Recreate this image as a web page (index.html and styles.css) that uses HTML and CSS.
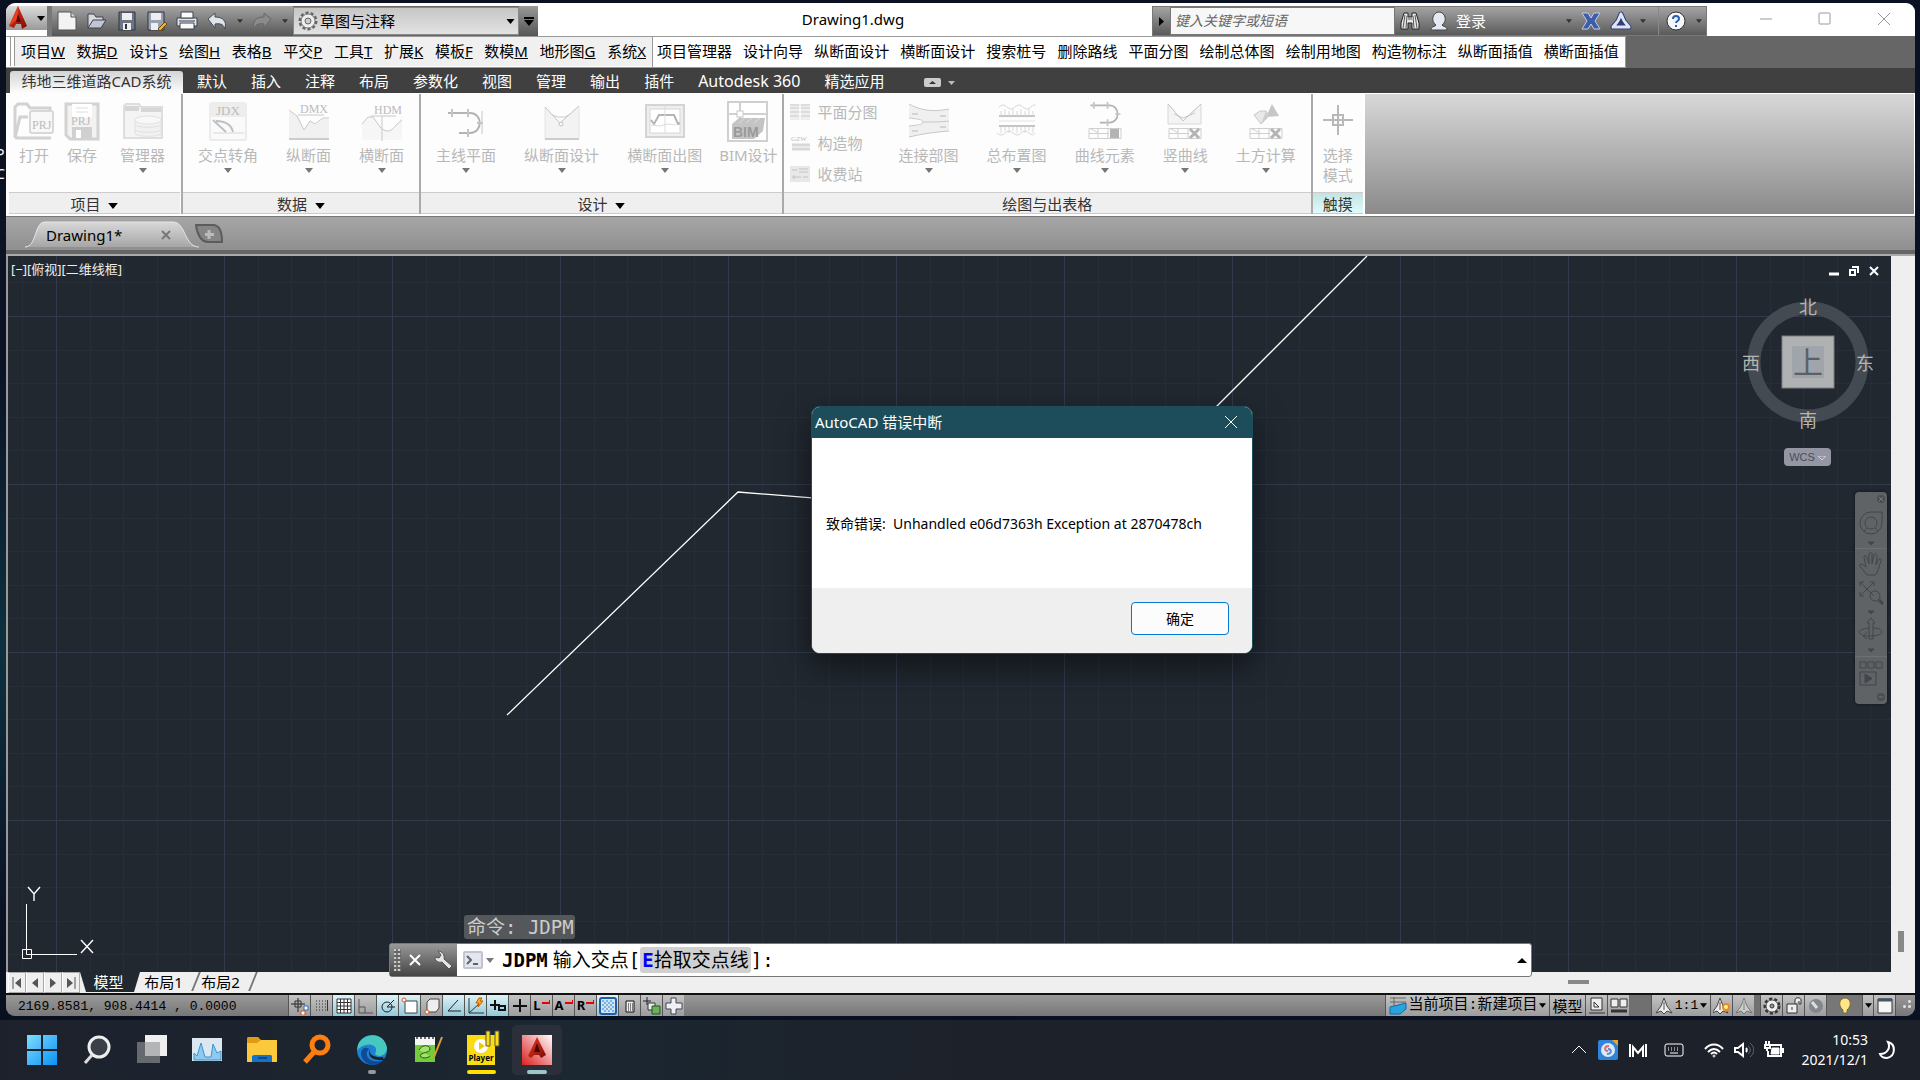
FILE: index.html
```html
<!DOCTYPE html>
<html lang="zh-CN">

<head>
    <meta charset="UTF-8">
    <title>Drawing1.dwg</title>
    <link rel="stylesheet" href="styles.css">
</head>

<body>

    <!-- shared shapes -->
    <svg class="defs" aria-hidden="true">
        <symbol id="caret" viewBox="0 0 8 5"><path d="M0 0h8L4 5z" /></symbol>
        <symbol id="sheet" viewBox="0 0 34 12">
            <path d="M1 1h32v10H1zM1 6h20M10 1v10M20 1v10M2 1l8 4" fill="none" stroke="#cfcfcf" />
        </symbol>
        <symbol id="curve" viewBox="0 0 36 28">
            <path d="M1 4h22c13 0 13 20 0 20H12" fill="none" stroke="#b4b4b4" stroke-width="2" />
            <path d="M5 0v8M21 0v8M30 14h6M21 20v8" fill="none" stroke="#c4c4c4" stroke-width="2" />
        </symbol>
        <symbol id="person-a" viewBox="0 0 18 18">
            <path d="M9 1l3 8 5 7-5-2-3 3-3-3-5 2 5-7z" fill="#eee" stroke="#444" />
            <path d="M9 5v8" stroke="#555" />
        </symbol>
        <linearGradient id="red" x1="0" y1="0" x2="1" y2="1">
            <stop offset="0" stop-color="#ea3a1f" />
            <stop offset="1" stop-color="#7d0c06" />
        </linearGradient>
        <linearGradient id="redbox" x1="0" y1="1" x2="1" y2="0">
            <stop offset="0" stop-color="#dc2020" />
            <stop offset="1" stop-color="#ffffff" />
        </linearGradient>
        <linearGradient id="winlogo" x1="0" y1="0" x2="1" y2="1">
            <stop offset="0" stop-color="#7ddcff" />
            <stop offset="1" stop-color="#0a92f5" />
        </linearGradient>
    </svg>

    <div class="desktop">
        <div class="desktop-label">P<br>C</div>

        <div class="window">

            <!-- title bar -->
            <header class="titlebar">
                <button class="app-btn" aria-label="菜单">
                    <svg width="18" height="24" viewBox="0 0 18 24"><path d="M9 0l9 20-5 3-1-5H7l-2 4-5-2z" fill="url(#red)" /><path d="M9 0v13l-9 7z" fill="#e5401f" /><path d="M9 8l3 8H7z" fill="#5c0805" /></svg>
                    <svg class="caret" width="8" height="5"><use href="#caret" /></svg>
                </button>
                <div class="qat">
                    <button aria-label="新建"><svg width="22" height="20" viewBox="0 0 22 20"><path d="M2 1h13l5 5v13H2z" fill="#f3f3f3" stroke="#555" /><path d="M15 1v5h5" fill="#cfd3dc" stroke="#555" /></svg></button>
                    <button aria-label="打开"><svg width="22" height="20" viewBox="0 0 22 20"><path d="M2 17V3h6l2 3h7v3" fill="#d6d9df" stroke="#3c4250" /><path d="M2 17l5-8h13l-5 8z" fill="#c0c6d2" stroke="#3c4250" /></svg></button>
                    <button aria-label="保存"><svg width="20" height="20" viewBox="0 0 20 20"><path d="M2 1h16v18H2z" fill="#6c7586" stroke="#2e3542" /><path d="M5 2h10v7H5zM6 12h8v7H6z" fill="#eee" /><path d="M8 13h2v5H8z" fill="#333" /></svg></button>
                    <button aria-label="另存为"><svg width="22" height="20" viewBox="0 0 22 20"><path d="M2 1h16v18H2z" fill="#9aa1ae" stroke="#2e3542" /><path d="M5 2h10v7H5zM5 12h7v7H5z" fill="#eee" /><path d="M12 18l7-7 2 2-7 7z" fill="#f0b429" stroke="#6b4a10" /></svg></button>
                    <button aria-label="打印"><svg width="22" height="20" viewBox="0 0 22 20"><path d="M1 7h20v8H1z" fill="#e4e6ea" stroke="#3c4250" /><path d="M5 1h12v6H5zM4 12h14v6H4z" fill="#fafafa" stroke="#3c4250" /><path d="M3 10h16" stroke="#8a90a0" stroke-width="2" /></svg></button>
                    <button aria-label="放弃"><svg width="20" height="16" viewBox="0 0 20 16"><path d="M1 6l7-6v4c8 0 12 4 10 12-1-4-4-6-10-5v4z" fill="#dfe3ea" stroke="#454c5a" /></svg></button>
                    <button class="drop" aria-label="放弃列表"><svg width="6" height="4"><use href="#caret" /></svg></button>
                    <button aria-label="重做"><svg width="20" height="16" viewBox="0 0 20 16"><path d="M19 6l-7-6v4C4 4 0 8 2 16c1-4 4-6 10-5v4z" fill="#8b8b8b" stroke="#666" /></svg></button>
                    <button class="drop" aria-label="重做列表"><svg width="6" height="4"><use href="#caret" /></svg></button>
                </div>
                <div class="workspace">
                    <svg class="gear" width="20" height="20" viewBox="0 0 20 20"><circle cx="10" cy="10" r="8" fill="none" stroke="#666" stroke-width="3" stroke-dasharray="3 2" /><circle cx="10" cy="10" r="7" fill="#eee" stroke="#777" /><circle cx="10" cy="10" r="3" fill="#ccc" stroke="#666" /></svg>
                    <select aria-label="工作空间"><option>草图与注释</option></select>
                    <svg class="caret" width="9" height="5"><use href="#caret" /></svg>
                </div>
                <button class="qat-more" aria-label="自定义"><svg width="10" height="9" viewBox="0 0 10 9"><path d="M0 0h10v2H0zM0 3h10L5 9z" /></svg></button>

                <h1>Drawing1.dwg</h1>

                <div class="infocenter">
                    <button class="info-toggle" aria-label="展开"><svg width="5" height="9" viewBox="0 0 5 9"><path d="M0 0l5 4.500L0 9z" /></svg></button>
                    <input type="text" placeholder="键入关键字或短语" aria-label="搜索">
                    <button class="search" aria-label="搜索"><svg width="20" height="20" viewBox="0 0 20 20"><path d="M4 2h4v4h4V2h4l3 10v6h-7v-6H8v6H1v-6z" fill="#e8e8e8" stroke="#222" /><path d="M5 4L3 17M7 5L6 17M13 5l1 12M15 4l2 13M8 8h4" stroke="#555" /></svg></button>
                    <button class="login"><svg width="18" height="20" viewBox="0 0 18 20"><path d="M1 19c0-4 4-3 5-5-6-4-3-13 3-13s9 9 3 13c1 2 5 1 5 5z" fill="#e6e9f2" stroke="#444" /></svg>登录</button>
                    <button class="drop" aria-label="登录选项"><svg width="6" height="4"><use href="#caret" /></svg></button>
                    <button aria-label="Exchange"><svg width="20" height="18" viewBox="0 0 20 18"><path d="M1 1h6l3 5 3-5h6l-5 8 5 8h-6l-3-5-3 5H1l5-8z" fill="#3d5cab" stroke="#c4cde6" /></svg></button>
                    <button aria-label="Autodesk 360"><svg width="22" height="20" viewBox="0 0 22 20"><path d="M11 3L8 10 3 16h16l-5-6z" fill="none" stroke="#2e3f7a" stroke-width="5" stroke-linejoin="round" /><path d="M11 3L8 10 3 16h16l-5-6z" fill="none" stroke="#dfe4f2" stroke-width="3" stroke-linejoin="round" /><path d="M11 8l-4 6h8z" fill="#2e3f7a" /></svg></button>
                    <button class="drop" aria-label="更多"><svg width="6" height="4"><use href="#caret" /></svg></button>
                    <button class="help" aria-label="帮助"><svg width="20" height="20" viewBox="0 0 20 20"><circle cx="10" cy="10" r="9" fill="#f4f6fa" stroke="#333" /><path d="M7 8c0-4 6-4 6 0 0 2-3 2-3 4M10 14v2" fill="none" stroke="#2d5bb0" stroke-width="2" /></svg></button>
                    <button class="drop" aria-label="帮助选项"><svg width="6" height="4"><use href="#caret" /></svg></button>
                </div>
                <div class="win-controls">
                    <button aria-label="最小化"><svg width="14" height="14"><path d="M1 7h12" /></svg></button>
                    <button aria-label="最大化"><svg width="14" height="14"><rect x="1" y="1" width="11" height="11" rx="1" /></svg></button>
                    <button aria-label="关闭"><svg width="14" height="14"><path d="M1 1l12 12M13 1L1 13" /></svg></button>
                </div>
            </header>

            <!-- menus -->
            <div class="menubar">
                <nav class="menus">
                    <button>项目<u>W</u></button>
                    <button>数据<u>D</u></button>
                    <button>设计<u>S</u></button>
                    <button>绘图<u>H</u></button>
                    <button>表格<u>B</u></button>
                    <button>平交<u>P</u></button>
                    <button>工具<u>T</u></button>
                    <button>扩展<u>K</u></button>
                    <button>模板<u>F</u></button>
                    <button>数模<u>M</u></button>
                    <button>地形图<u>G</u></button>
                    <button>系统<u>X</u></button>
                </nav>
                <nav class="tools">
                    <button>项目管理器</button>
                    <button>设计向导</button>
                    <button>纵断面设计</button>
                    <button>横断面设计</button>
                    <button>搜索桩号</button>
                    <button>删除路线</button>
                    <button>平面分图</button>
                    <button>绘制总体图</button>
                    <button>绘制用地图</button>
                    <button>构造物标注</button>
                    <button>纵断面插值</button>
                    <button>横断面插值</button>
                </nav>
            </div>

            <nav class="ribbon-tabs">
                <button class="active">纬地三维道路CAD系统</button>
                <button>默认</button>
                <button>插入</button>
                <button>注释</button>
                <button>布局</button>
                <button>参数化</button>
                <button>视图</button>
                <button>管理</button>
                <button>输出</button>
                <button>插件</button>
                <button class="latin">Autodesk 360</button>
                <button>精选应用</button>
                <button class="collapse" aria-label="最小化功能区"><svg width="34" height="10" viewBox="0 0 34 10"><rect width="17" height="9" rx="2" fill="#ccc" /><path d="M5 6h7L8.500 3z" fill="#333" /><path d="M24 3h7l-3.500 4z" fill="#bbb" /></svg></button>
            </nav>

            <!-- ribbon -->
            <div class="ribbon">
                <section class="panel first">
                    <div class="items">
                        <button class="tight"><svg viewBox="0 0 40 40"><path d="M1 36V5l3-3h9l3 4h20v6M1 36L6 15h8M1 36h36" fill="none" stroke="#d2d2d2" stroke-width="3" /><rect x="16" y="9" width="23" height="22" rx="2" fill="#f8f8f8" stroke="#d8d8d8" stroke-width="2" /><text x="18" y="27" font-size="12">PRJ</text></svg>打开</button>
                        <button class="tight"><svg viewBox="0 0 40 40"><path d="M4 2h32v35H8l-4-4z" fill="#f2f2f2" stroke="#d2d2d2" stroke-width="3" /><path d="M10 2h20v14H10z" fill="#fff" /><path d="M14 6h12M14 10h12" stroke="#ddd" /><path d="M10 25h20v12H10z" fill="#d0d0d0" /><path d="M14 28h5v8h-5z" fill="#fff" /><text x="9" y="23" font-size="12">PRJ</text></svg>保存</button>
                        <button><svg viewBox="0 0 40 40"><path d="M1 36V4l2-2h13l2 3h21v31z" fill="#f4f4f4" stroke="#dedede" stroke-width="2" /><path d="M2 4h14v5H2zM18 6h20v4H18z" fill="#d6d6d6" /><path d="M12 18v14c4 3 22 3 26 0V18" fill="#f1f1f1" stroke="#e2e2e2" /><ellipse cx="25" cy="18" rx="13" ry="4" fill="#f8f8f8" stroke="#e2e2e2" /><path d="M12 23c4 3 22 3 26 0M12 28c4 3 22 3 26 0" fill="none" stroke="#e0e0e0" /></svg>管理器<i></i></button>
                    </div>
                    <footer>项目 <svg width="10" height="6"><use href="#caret" /></svg></footer>
                </section>
                <section class="panel">
                    <div class="items">
                        <button><svg viewBox="0 0 40 40"><rect x="2" y="1" width="36" height="37" rx="1" fill="#fafafa" stroke="#dcdcdc" /><path d="M2 1h36v14H2z" fill="#ededed" /><text x="8" y="13" font-size="13">JDX</text><path d="M5 18l13 12M8 19c9 0 15 3 17 11" fill="none" stroke="#c0c0c0" stroke-width="2" /><path d="M5 31h31" stroke="#d8d8d8" /></svg>交点转角<i></i></button>
                        <button><svg viewBox="0 0 40 40"><path d="M0 8l8 6 7 14 6-10 5 5 8-6 6 0v20H0z" fill="#f1f1f1" /><path d="M0 8l8 6 7 14 6-9 5 3 8-6h6M9 13h26" fill="none" stroke="#c8c8c8" /><path d="M0 37h40" stroke="#ccc" stroke-width="2" /><text x="11" y="11" font-size="12">DMX</text></svg>纵断面<i></i></button>
                        <button><svg viewBox="0 0 40 40"><path d="M0 22l6-7h5l7 10 7 4 7-2 8-13v24H0z" fill="#f6f6f6" /><path d="M0 22l6-7h5l7 10c7 7 12 4 16-2l6-5M20 14v25M9 14h25" fill="none" stroke="#c8c8c8" /><text x="12" y="12" font-size="12">HDM</text></svg>横断面<i></i></button>
                    </div>
                    <footer>数据 <svg width="10" height="6"><use href="#caret" /></svg></footer>
                </section>
                <section class="panel">
                    <div class="items">
                        <button><svg viewBox="0 0 40 40"><use href="#curve" x="1" y="7" width="36" height="28" /><path d="M36 9v23" stroke="#c8c8c8" /></svg>主线平面<i></i></button>
                        <button><svg viewBox="0 0 40 40"><path d="M3 5l15 16L37 4v33H3z" fill="#f3f3f3" stroke="#e4e4e4" /><path d="M3 5l15 16L37 4M10 13l6 2h7l5-3" fill="none" stroke="#cacaca" /><path d="M3 37h34" stroke="#ccc" stroke-width="2" /><circle cx="19" cy="22" r="2" fill="#fff" stroke="#c0c0c0" /></svg>纵断面设计<i></i></button>
                        <button><svg viewBox="0 0 40 40"><rect x="1" y="3" width="38" height="32" fill="#efefef" stroke="#d4d4d4" stroke-width="2" /><rect x="5" y="7" width="30" height="24" fill="#fff" stroke="#d6d6d6" /><path d="M6 18l3 4 5-9h15l4 9 2-1" fill="none" stroke="#b4b4b4" stroke-width="2" /><path d="M6 23l9 1 8-2 8 1M20 4v27" fill="none" stroke="#ddd" /></svg>横断面出图<i></i></button>
                        <button class="snug"><svg viewBox="0 0 40 40"><rect x="0" y="0" width="39" height="39" fill="#fff" stroke="#d0d0d0" stroke-width="2" /><path d="M12 0v16M0 12h39" stroke="#d0d0d0" stroke-width="2" /><rect x="9" y="9" width="6" height="6" fill="#fff" stroke="#c8c8c8" /><path d="M4 22l7-6h26l-2 13-9 8H4z" fill="#c4c4c4" /><path d="M11 21l6-5M18 21l6-5M26 21l6-5" stroke="#ddd" /><text class="bim" x="5" y="35" font-size="14">BIM</text></svg>BIM设计</button>
                    </div>
                    <footer>设计 <svg width="10" height="6"><use href="#caret" /></svg></footer>
                </section>
                <section class="panel">
                    <div class="items">
                        <div class="list">
                            <button><svg viewBox="0 0 20 16"><path d="M0 0h20v16H0z" fill="#eee" /><path d="M0 4h9M0 8h9M0 12h9M11 4h9M11 8h9M11 12h9M0 1h20" stroke="#ccc" /><path d="M10 0v16" stroke="#fff" /></svg>平面分图</button>
                            <button><svg viewBox="0 0 20 16"><text x="1" y="6" font-size="7">GZW</text><path d="M2 10h18M2 14h18" stroke="#d8d8d8" stroke-width="3" /></svg>构造物</button>
                            <button><svg viewBox="0 0 20 16"><path d="M0 0h20v16H0z" fill="#e8e8e8" /><path d="M2 4h5M9 3h9M9 6h9M2 11h9M13 11h5M4 9v4" stroke="#c4c4c4" /></svg>收费站</button>
                        </div>
                        <button><svg viewBox="0 0 40 40"><path d="M0 2c12 7 26 8 40 5v22c-14 1-28 3-40 6V24c7 0 14 0 14-4S7 17 0 16z" fill="#f0f0f0" /><path d="M0 2c12 7 26 8 40 5M40 29c-14 1-28 3-40 6M0 16c7 1 14 1 14 4s-7 3-14 4M14 20c10 0 18 0 26-1" fill="none" stroke="#c8c8c8" /><path d="M3 12h6M31 14h6M3 29h6M31 25h6" stroke="#d4d4d4" stroke-width="2" /></svg>连接部图<i></i></button>
                        <button><svg viewBox="0 0 40 40"><path d="M2 5q4-4 8 0t8 0 8 0 8 0 4-1M0 31q4 4 8 0t8 0 8 0 8 0 6 0" fill="none" stroke="#d8d8d8" /><path d="M2 14h36M2 24h36" stroke="#c4c4c4" stroke-width="2" /><path d="M2 19h36" stroke="#e4e4e4" /><path d="M4 9v5M8 7v7M12 9v5M16 7v7M20 9v5M24 7v7M28 9v5M32 7v7M36 9v5M4 25v6M8 25v4M12 25v6M16 25v4M20 25v6M24 25v4M28 25v6M32 25v4M36 25v6" stroke="#d8d8d8" /></svg>总布置图<i></i></button>
                        <button><svg viewBox="0 0 40 40"><use href="#curve" x="3" y="0" width="34" height="24" /><use href="#sheet" x="3" y="25" width="34" height="13" /><path d="M25 27h9v9h-9z" fill="#b4b4b4" /></svg>曲线元素<i></i></button>
                        <button><svg viewBox="0 0 40 40"><path d="M3 2l15 17L36 2v20H3z" fill="#f4f4f4" stroke="#d8d8d8" /><path d="M3 2l15 17L36 2M9 12l9 4 12-5" fill="none" stroke="#c8c8c8" /><use href="#sheet" x="3" y="25" width="34" height="13" /><path d="M25 27l9 9M34 27l-9 9" stroke="#b4b4b4" stroke-width="3" /></svg>竖曲线<i></i></button>
                        <button><svg viewBox="0 0 40 40"><path d="M26 2l7 12-13 1z" fill="#c6c6c6" /><path d="M8 13l6-4 6 0 3 5-8 8z" fill="#e8e8e8" stroke="#c8c8c8" /><path d="M20 9l3 5-8 8z" fill="#cfcfcf" /><use href="#sheet" x="3" y="25" width="34" height="13" /><path d="M25 27l9 9M34 27l-9 9" stroke="#b4b4b4" stroke-width="3" /></svg>土方计算<i></i></button>
                    </div>
                    <footer>绘图与出表格</footer>
                </section>
                <section class="panel touch">
                    <div class="items">
                        <button class="tight"><svg viewBox="0 0 40 40"><path d="M5 18h30M20 3v30M15 13h10v10H15z" fill="none" stroke="#b8b8b8" stroke-width="2" /></svg>选择<br>模式</button>
                    </div>
                    <footer>触摸</footer>
                </section>
            </div>

            <!-- document tabs -->
            <div class="doc-tabs">
                <a class="doc-tab" href="#">
                    <svg class="shape" viewBox="0 0 174 27" preserveAspectRatio="none"><defs><linearGradient id="tabfill" x1="0" y1="0" x2="0" y2="1"><stop offset="0" stop-color="#d8d8d8" /><stop offset="1" stop-color="#a6a6a6" /></linearGradient></defs><path d="M0 26C12 26 9 1 20 1h128c13 0 11 25 26 25" fill="url(#tabfill)" stroke="#e6e6e6" /></svg>
                    <span>Drawing1*</span>
                    <svg class="x" width="10" height="10"><path d="M1 1l8 8M9 1L1 9" stroke="#777" stroke-width="2" /></svg>
                </a>
                <button class="new-tab" aria-label="新图形"><svg width="29" height="20" viewBox="0 0 29 20"><path d="M1 1h17c6 0 9 6 9 17H13C6 18 2 10 1 1z" fill="#858585" stroke="#5c5c5c" stroke-width="2" /><path d="M14 6v9M10 10.500h9" stroke="#bbb" stroke-width="3" /></svg></button>
            </div>

            <!-- drawing area -->
            <main class="workarea">
                <div class="canvas">
                    <svg class="drawing">
                        <defs>
                            <pattern id="grid" width="168" height="168" patternUnits="userSpaceOnUse" patternTransform="translate(48 60)">
                                <path d="M34.500 0v168M67.500 0v168M101.500 0v168M134.500 0v168M0 34.500h168M0 67.500h168M0 101.500h168M0 134.500h168" stroke="#272e39" />
                                <path d="M.5 0v168M0 .5h168" stroke="#333a4c" />
                            </pattern>
                        </defs>
                        <rect width="100%" height="100%" fill="url(#grid)" />
                        <path d="M499 459L730 236L1094 265L1359 0" fill="none" stroke="#fff" stroke-width="1.300" />
                        <!-- UCS icon -->
                        <g fill="none" stroke="#fff">
                            <path d="M18.500 648v46M19 698.500h50" />
                            <path d="M14.500 693.500h9v9h-9zM18.500 694v4.500h5" />
                            <path d="M20 631l6 7 6-7M26 638v7M73 684l12 13M85 684l-12 13" stroke-width="1.400" />
                        </g>
                    </svg>

                    <span class="view-label">[−][俯视][二维线框]</span>

                    <div class="mdi">
                        <button aria-label="最小化"><svg width="10" height="10"><path d="M0 8h10" stroke="#fff" stroke-width="3" /></svg></button>
                        <button aria-label="还原"><svg width="10" height="10"><path d="M3 1h6v6M1 4h5v5H1z" fill="none" stroke="#fff" stroke-width="2" /></svg></button>
                        <button aria-label="关闭"><svg width="10" height="10"><path d="M1 1l8 8M9 1L1 9" stroke="#fff" stroke-width="2" /></svg></button>
                    </div>

                    <svg class="viewcube" width="136" height="136" viewBox="0 0 136 136">
                        <circle cx="68" cy="68" r="54" fill="none" stroke="#444a51" stroke-width="13" />
                        <rect x="42" y="42" width="52" height="52" fill="#afb1b2" stroke="#7c7e80" />
                        <rect x="52" y="52" width="32" height="32" fill="#9fa5aa" />
                        <text class="top" x="68" y="79">上</text>
                        <text x="68" y="20">北</text>
                        <text x="68" y="133">南</text>
                        <text x="11" y="76">西</text>
                        <text x="125" y="76">东</text>
                    </svg>
                    <button class="wcs">WCS <svg width="8" height="5" viewBox="0 0 8 5"><path d="M0 0h8L4 4z" fill="none" stroke="#d0d0da" /></svg></button>

                    <div class="navbar">
                        <button class="end" aria-label="关闭"><svg width="8" height="8"><circle cx="4" cy="4" r="4" fill="#4b4f52" /><path d="M2 2l4 4M6 2L2 6" stroke="#777" /></svg></button>
                        <button aria-label="控制盘"><svg width="24" height="38" viewBox="0 0 24 38"><path d="M12 4h11v11a11 11 0 1 1-11-11z" /><circle cx="12" cy="15" r="6" /><path d="M8 20l-3 3M16 20l3 3" /><path class="solid" d="M9 34h6l-3 3z" /></svg></button>
                        <button class="sep" aria-label="平移"><svg width="24" height="24" viewBox="0 0 24 24"><path d="M8 23L1 14c-1-2 1-3 3-1l3 2L5 5c0-2 2-2 3 0l2 7V2c0-2 3-2 3 0v10l2-9c1-2 3-1 3 1l-1 9 3-6c1-1 3 0 2 2l-4 12-2 2z" /></svg></button>
                        <button aria-label="缩放"><svg width="24" height="38" viewBox="0 0 24 38"><path d="M1 4l14 14M15 4L1 18M1 8V4h4M11 4h4v4M1 14v4h4" /><circle cx="16" cy="18" r="5" /><path d="M20 22l4 4" stroke-width="3" /><path class="solid" d="M9 33h6l-3 3z" /></svg></button>
                        <button aria-label="动态观察"><svg width="24" height="38" viewBox="0 0 24 38"><path d="M12 1l4 5h-2v16h-4V6H8zM14 11c12 0 12 8-2 8H4M10 11C-2 12-1 17 4 18M8 15l-4 4 4 3" /><path class="solid" d="M9 32h6l-3 3z" /></svg></button>
                        <button class="sep" aria-label="ShowMotion"><svg width="24" height="26" viewBox="0 0 24 26"><path d="M1 1h6v6H1zM9 1h6v6H9zM17 1h6v6h-6zM1 11h16v13H1z" /><path class="solid" d="M6 13v9l7-4.500z" /></svg></button>
                        <button class="end" aria-label="选项"><svg width="8" height="8"><circle cx="4" cy="4" r="4" fill="#4b4f52" /><path d="M2 4h4" stroke="#777" /></svg></button>
                    </div>

                    <div class="command">
                        <div class="history">命令: JDPM</div>
                        <div class="cmd-row">
                            <div class="cmd-handle">
                                <span class="grip"></span>
                                <button aria-label="关闭"><svg width="12" height="12"><path d="M1 1l10 10M11 1L1 11" stroke="#fff" stroke-width="2" /></svg></button>
                                <button aria-label="自定义"><svg width="20" height="20" viewBox="0 0 20 20"><path d="M5 1l3 4-2 3-4-1c0 4 3 6 7 5l7 7 3-3-8-7c1-4-2-8-6-8z" fill="#e4e6ea" stroke="#555" /></svg></button>
                            </div>
                            <div class="cmd-line">
                                <svg width="20" height="18" viewBox="0 0 20 18"><rect x="1" y="1" width="18" height="16" rx="1" fill="#e3e6ec" stroke="#c0c4ce" stroke-width="2" /><path d="M4 5l4 4-4 4M10 13h5" fill="none" stroke="#5b6275" stroke-width="2" /></svg>
                                <svg class="recent" width="8" height="5"><use href="#caret" /></svg>
                                <p><b>JDPM</b><span class="prompt">输入交点</span>[<a href="#"><b>E</b>拾取交点线</a>]:</p>
                                <svg class="expand" width="10" height="5"><path d="M0 5h10L5 0z" /></svg>
                            </div>
                        </div>
                    </div>
                </div>
                <div class="vscroll"><span></span></div>
            </main>

            <div class="layout-tabs">
                <button class="nav" aria-label="第一个"><svg width="12" height="12"><path d="M2 0v12" stroke="#555" /><path d="M10 1v10L4 6z" /></svg></button>
                <button class="nav" aria-label="上一个"><svg width="12" height="12"><path d="M9 1v10L3 6z" /></svg></button>
                <button class="nav" aria-label="下一个"><svg width="12" height="12"><path d="M3 1v10l6-5z" /></svg></button>
                <button class="nav" aria-label="最后一个"><svg width="12" height="12"><path d="M10 0v12" stroke="#555" /><path d="M2 1v10l6-5z" /></svg></button>
                <button class="tab model">模型</button>
                <button class="tab">布局1</button>
                <button class="tab">布局2</button>
                <span class="hthumb"></span>
            </div>

            <!-- status bar -->
            <div class="statusbar">
                <span class="coords">2169.8581, 908.4414 , 0.0000</span>
                <button aria-label="推断约束"><svg viewBox="0 0 18 18"><path d="M7 1v14M0 7h14" stroke="#222" /><path d="M4 4h6v6H4z" fill="none" stroke="#333" /><path d="M13 9h4v4h-4z" fill="#fff" stroke="#2a6fc0" /><path d="M10 14h4v4h-4z" fill="#fff" stroke="#d2521a" /></svg></button>
                <button aria-label="捕捉"><svg viewBox="0 0 18 18"><path d="M3 4h10M3 7h10M3 10h10M3 13h10" stroke="#333" stroke-dasharray="1 2" /><path d="M14.500 3v11" stroke="#333" /></svg></button>
                <button class="on" aria-label="栅格"><svg viewBox="0 0 18 18"><path d="M2 2h14v14H2zM5.500 2v14M9 2v14M12.500 2v14M2 5.500h14M2 9h14M2 12.500h14" fill="#fff" stroke="#333" /></svg></button>
                <button aria-label="正交"><svg viewBox="0 0 18 18"><path d="M2 2v14h14M2 10h6v6" fill="none" stroke="#555" /></svg></button>
                <button class="on" aria-label="极轴"><svg viewBox="0 0 18 18"><circle cx="8" cy="10" r="5" fill="none" stroke="#222" /><path d="M8 10l7-7M8 10h8" stroke="#222" /></svg></button>
                <button class="on" aria-label="对象捕捉"><svg viewBox="0 0 18 18"><path d="M4 4h12v12H4z" fill="#fff" stroke="#444" /><circle cx="3" cy="3" r="2" fill="#fff" stroke="#e0571b" /></svg></button>
                <button aria-label="三维对象捕捉"><svg viewBox="0 0 18 18"><path d="M4 5l3-3h9v9l-3 4H4z" fill="#eee" stroke="#444" /><circle cx="4" cy="15" r="2" fill="#fff" stroke="#e0571b" /></svg></button>
                <button class="on" aria-label="对象追踪"><svg viewBox="0 0 18 18"><path d="M13 3L3 14h13" fill="none" stroke="#222" /></svg></button>
                <button class="on" aria-label="动态 UCS"><svg viewBox="0 0 18 18"><path d="M2 1v15h15M2 16L13 6" fill="none" stroke="#333" /><path d="M12 1l-3 5h3l-1 4 5-6h-3l2-3z" fill="#ffb21a" stroke="#c05a00" /></svg></button>
                <button class="on" aria-label="动态输入"><svg viewBox="0 0 18 18"><path d="M6 3v10M1 8h10M10 9h6v4h-6z" fill="none" stroke="#111" stroke-width="2" /></svg></button>
                <button aria-label="线宽"><svg viewBox="0 0 18 18"><path d="M9 2v13M2 9h14" stroke="#111" stroke-width="2" /></svg></button>
                <button class="lar">L<svg viewBox="0 0 8 4"><path d="M0 3h8V0" /></svg></button>
                <button class="lar">A<svg viewBox="0 0 8 4"><path d="M0 3h8V0" /></svg></button>
                <button class="lar">R<svg viewBox="0 0 8 4"><path d="M0 3h8V0" /></svg></button>
                <button class="on" aria-label="透明度"><svg viewBox="0 0 18 18"><rect x="1" y="1" width="16" height="16" rx="2" fill="#cfe4f6" stroke="#1d5fa8" stroke-width="2" /><path d="M4 3v12M8 3v12M12 3v12" stroke="#7db3dc" stroke-width="2" stroke-dasharray="2 2" /><path d="M6 5v11M10 5v11M14 5v11" stroke="#7db3dc" stroke-width="2" stroke-dasharray="2 2" /></svg></button>
                <button aria-label="快捷特性"><svg viewBox="0 0 18 18"><path d="M5 4h8v11H5z" fill="#eee" stroke="#111" /><path d="M7 7h5M7 9h5M7 11h5M7 13h5" stroke="#111" stroke-dasharray="1 1" /></svg></button>
                <button aria-label="选择循环"><svg viewBox="0 0 18 18"><path d="M4 0v8M0 4h8" stroke="#223" /><path d="M5 6h7v7H5z" fill="#eee" stroke="#333" /><path d="M9 9h8v8H9z" fill="#6fae5a" stroke="#1d5a15" /></svg></button>
                <button aria-label="注释监视器"><svg viewBox="0 0 18 18"><path d="M6 1h5v5h6v6h-6v5H6v-5H1V6h5z" fill="#eef0f5" stroke="#445" /></svg></button>
                <span class="fill"></span>
                <button class="project"><svg viewBox="0 0 18 18"><path d="M1 1h16M1 5h16M5 0v12" stroke="#666" /><path d="M1 10l16-4v6L11 17H1z" fill="#29a3e0" stroke="#0d6ba3" /></svg>当前项目:新建项目<svg class="caret" width="7" height="5"><use href="#caret" /></svg></button>
                <button class="model-space">模型</button>
                <button aria-label="快速查看布局"><svg viewBox="0 0 18 18"><path d="M3 1h11v12H3z" fill="#eee" stroke="#333" /><path d="M6 5v5h5zM1 16h16" fill="none" stroke="#333" /></svg></button>
                <button aria-label="快速查看图形"><svg viewBox="0 0 18 18"><path d="M1 2h7v8H1zM10 2h7v8h-7z" fill="#eee" stroke="#333" /><path d="M1 14h16" stroke="#333" stroke-width="3" /></svg></button>
                <span class="gap"></span>
                <button class="scale"><svg viewBox="0 0 18 18"><use href="#person-a" /></svg>1:1<svg class="caret" width="7" height="5"><use href="#caret" /></svg></button>
                <button aria-label="注释可见性"><svg viewBox="0 0 18 18"><use href="#person-a" x="-2" /><circle cx="13" cy="10" r="3" fill="#fff3b0" stroke="#f08a10" stroke-width="2" /></svg></button>
                <button aria-label="自动缩放" class="dim"><svg viewBox="0 0 18 18"><use href="#person-a" /></svg></button>
                <span class="gap small"></span>
                <button aria-label="切换工作空间"><svg viewBox="0 0 18 18"><circle cx="9" cy="9" r="7" fill="none" stroke="#333" stroke-width="3" stroke-dasharray="3 2" /><circle cx="9" cy="9" r="6" fill="#eee" stroke="#555" /><circle cx="9" cy="9" r="2" fill="#999" stroke="#333" /></svg></button>
                <button aria-label="锁定"><svg viewBox="0 0 18 18"><path d="M2 7h10v9H2zM10 7V3c0-3 6-3 6 0v4h-2V4" fill="#eee" stroke="#333" /><path d="M7 10v3" stroke="#333" /></svg></button>
                <button aria-label="性能"><svg viewBox="0 0 18 18"><circle cx="9" cy="9" r="7" fill="#83868c" /><path d="M5 5l5 6" stroke="#ddd" stroke-width="3" /></svg></button>
                <button class="pressed" aria-label="隔离对象"><svg viewBox="0 0 18 18"><path d="M7 16h4v-3c6-5 3-12-2-12S1 8 7 13z" fill="#ffe58a" stroke="#7a6a30" /></svg></button>
                <button class="thin" aria-label="菜单"><svg class="caret" width="6" height="4"><use href="#caret" /></svg></button>
                <button aria-label="全屏显示"><svg viewBox="0 0 18 18"><path d="M2 2h14v14H2z" fill="#f6f6f6" stroke="#333" /><path d="M2 3h14" stroke="#456" stroke-width="3" /></svg></button>
                <span class="sizegrip"></span>
            </div>
        </div>

        <!-- error dialog -->
        <div class="dialog" role="alertdialog" aria-labelledby="dlg-title">
            <div class="dlg-title">
                <h2 id="dlg-title">AutoCAD 错误中断</h2>
                <button aria-label="关闭"><svg width="14" height="14"><path d="M1 1l12 12M13 1L1 13" stroke="#fff" /></svg></button>
            </div>
            <p>致命错误:&nbsp; Unhandled e06d7363h Exception at 2870478ch</p>
            <div class="dlg-footer"><button>确定</button></div>
        </div>
    </div>

    <!-- taskbar -->
    <footer class="taskbar">
        <div class="apps">
            <button aria-label="开始"><svg viewBox="0 0 30 30"><path d="M0 0h14v14H0zM16 0h14v14H16zM0 16h14v14H0zM16 16h14v14H16z" fill="url(#winlogo)" /></svg></button>
            <button aria-label="搜索"><svg viewBox="0 0 30 30"><circle cx="17" cy="12" r="10" fill="#3b4048" stroke="#eee" stroke-width="3" /><path d="M10 20l-7 8" stroke="#ddd" stroke-width="3" /></svg></button>
            <button aria-label="任务视图"><svg viewBox="0 0 30 30"><path d="M0 7h23v21H0z" fill="#66696d" /><path d="M8 0h22v21H8z" fill="#efefef" /><path d="M8 7h15v14H8z" fill="#b4b5b6" /></svg></button>
            <button aria-label="资源监视器"><svg viewBox="0 0 30 30"><path d="M0 3h30v23H0z" fill="#dbe8f2" /><path d="M2 18l3 3 4-13 4 14 6 0 2-13 4 9 4-2v9H2z" fill="#8fc9ee" stroke="#3b95cf" /></svg></button>
            <button aria-label="文件资源管理器"><svg viewBox="0 0 30 30"><path d="M0 4c0-2 1-2 2-2h9l3 3h15v8H0z" fill="#e09b13" /><path d="M0 8h10l4-3h16v22H0z" fill="#fcc93c" /><path d="M5 27v-6l2-1h17l1 1v6z" fill="#1473c8" /><path d="M11 23h9" stroke="#0b4a8a" stroke-width="2" /></svg></button>
            <button aria-label="Everything"><svg viewBox="0 0 30 30"><circle cx="18" cy="10" r="8" fill="none" stroke="#ff7f0e" stroke-width="5" /><path d="M12 17l-9 10" stroke="#ff7f0e" stroke-width="5" /></svg></button>
            <button aria-label="Edge"><svg viewBox="0 0 30 30"><circle cx="15" cy="15" r="15" fill="#1f7fd0" /><path d="M1 10C5-2 27-5 30 13c0 8-9 10-12 6 4-7-3-11-9-9-5 1-8 4-9 6z" fill="#46c8c0" /><path d="M12 14c-6 5 0 16 14 11-6 9-21 5-22-6 0-5 4-8 8-5z" fill="#0c4b96" /><path d="M13 13c-2 5 2 10 13 9l1 3-5 0c-8 0-12-5-9-12z" fill="#1d222a" /></svg><i class="dot"></i></button>
            <button aria-label="Notepad++"><svg viewBox="0 0 30 30"><path d="M3 2h20v25H3z" fill="#f4f6f0" /><path d="M3 10h20v17H3z" fill="#74cc3a" /><path d="M7 15c3-6 11-5 11-1s-9 3-10 7c3 3 8 2 10 0" fill="#a5e070" stroke="#225c12" /><path d="M4 3h18" stroke="#666" stroke-width="2" stroke-dasharray="2 2" /><path d="M30 2l-8 20" stroke="#e0a030" stroke-width="2" /></svg></button>
            <button aria-label="Player"><svg viewBox="0 0 30 30"><path d="M0 0h28v30H0z" fill="#fbdc12" /><circle cx="14" cy="11" r="7" fill="#fff" /><path d="M12 7v8l6-4z" fill="#f0c800" /><path d="M19-4h4v15h-4zM28-4h4v15h-4z" fill="#fbdc12" stroke="#555" /><text class="player" x="14" y="26">Player</text></svg><i class="dot long"></i></button>
            <button class="current" aria-label="AutoCAD"><svg viewBox="0 0 30 30"><path d="M0 0h30v30H0z" fill="url(#redbox)" /><path d="M15 2l9 18-5 3-2-3h-5l-3 3-3-2z" fill="url(#red)" /><path d="M15 8l-3 9h6z" fill="#460707" /></svg><i class="dot teal"></i></button>
        </div>
        <div class="tray">
            <svg class="chev" width="18" height="20" viewBox="0 0 18 20"><path d="M2 13l7-7 7 7" /></svg>
            <svg class="im" width="20" height="20" viewBox="0 0 20 20"><rect width="20" height="20" rx="2" fill="#2f83d8" stroke="none" /><path d="M14 0h6v6z" fill="#f0a030" stroke="none" /><circle cx="10" cy="10" r="7" fill="#dfe8f4" stroke="none" /><path d="M11 6c-5 0-5 5-1 5" stroke="#e06a7a" stroke-width="2" /><path d="M9 14c5 0 5-5 1-5" stroke="#4b8fd8" stroke-width="2" /></svg>
            <svg class="m" width="20" height="20" viewBox="0 0 20 20"><path d="M2 4v13M5 17V7l5 6 5-6v10M18 4v13" stroke-width="2" /></svg>
            <svg class="kbd" width="20" height="20" viewBox="0 0 20 20"><rect x="1" y="4" width="18" height="12" rx="2" /><path d="M4 8h12M4 10h12" stroke-dasharray="1 2" /><path d="M6 13h8" /></svg>
            <svg class="wifi" width="20" height="20" viewBox="0 0 20 20"><path d="M1 9c5-6 13-6 18 0M4 12c4-4 8-4 12 0M7 14c2-2 4-2 6 0" stroke-width="2" /><circle cx="10" cy="16" r="1" /></svg>
            <svg class="vol" width="20" height="20" viewBox="0 0 20 20"><path d="M1 8h3l5-4v12l-5-4H1zM12 8c1 1 1 3 0 4" stroke-width="2" /><path d="M14 6c3 2 3 6 0 8M16 3c5 4 5 10 0 14" stroke="#666" /></svg>
            <svg class="bat" width="20" height="20" viewBox="0 0 20 20"><path d="M7 5h10v11H4v-5M19 8v5" stroke-width="2" /><path d="M8 8h7v6H7z" fill="#fff" /><path d="M2 1v3M5 1v3M1 5h5v3H1zM3 8v3" stroke-width="2" /></svg>
            <div class="clock">10:53<br>2021/12/1</div>
            <svg class="moon" width="18" height="20" viewBox="0 0 18 20"><path d="M10 2c8 2 8 14-1 16-3 0-6-1-7-4 7 0 11-6 8-12z" stroke-width="2" /></svg>
        </div>
    </footer>

</body>

</html>
```

FILE: styles.css
```css
* {
    box-sizing: border-box;
}

body {
    margin: 0;
    height: 100vh;
    display: flex;
    flex-direction: column;
    overflow: hidden;
    background: linear-gradient(#0b1020, #0b1426 35%, #0d3140 60%, #0a1224 85%, #080e1c);
    font-family: "Noto Sans", "Noto Sans CJK SC", sans-serif;
    font-size: 15px;
    line-height: 20px;
    color: #000;
}

button,
input,
select {
    font: inherit;
    color: inherit;
}

button {
    background: none;
    border: none;
    padding: 0;
    white-space: nowrap;
}

svg {
    flex: none;
}

.defs {
    position: absolute;
    width: 0;
    height: 0;
}

.desktop {
    flex: 1;
    min-height: 0;
    position: relative;
    display: flex;
    padding: 3px 5px 4px 6px;
    background: linear-gradient(90deg, transparent 50%, #0a1122 80%);
}

.desktop-label {
    position: absolute;
    left: -4px;
    top: 144px;
    color: #fff;
    font-size: 14px;
}

.window {
    position: relative;
    flex: 1;
    min-width: 0;
    display: flex;
    flex-direction: column;
    background: #666;
    border-radius: 9px;
    overflow: hidden;
}

/* title bar */
.titlebar {
    height: 33px;
    padding-top: 3px;
    display: flex;
    background: #fff;
}

.titlebar button {
    display: flex;
    align-items: center;
    justify-content: center;
}

.app-btn {
    width: 41px;
    height: 24px;
    gap: 10px;
    background: linear-gradient(#dcdcdc, #9a9a9a);
}

.qat {
    display: flex;
    width: 246px;
    border-left: 5px solid #777;
    background: linear-gradient(#a4a4a4, #565656);
}

.qat button {
    width: 30px;
}

.qat button.drop {
    width: 15px;
}

.drop {
    fill: #333;
}

.workspace {
    position: relative;
    width: 226px;
    padding: 1px 0;
    background: #666;
}

.workspace select {
    appearance: none;
    width: 100%;
    height: 28px;
    padding-left: 26px;
    border: 1px solid #888;
    border-radius: 0;
    background: linear-gradient(#c6c6c6, #e2e2e2);
}

.workspace .gear {
    position: absolute;
    left: 5px;
    top: 5px;
}

.workspace .caret {
    position: absolute;
    right: 4px;
    top: 13px;
}

.qat-more {
    width: 19px;
    background: linear-gradient(#999, #555);
}

.titlebar h1 {
    flex: 1;
    margin: 0;
    padding: 3px 0 0 16px;
    font-size: 15px;
    font-weight: normal;
    text-align: center;
}

.infocenter {
    width: 555px;
    display: flex;
    background: linear-gradient(#a4a4a4, #5a5a5a);
    border: 1px solid #777;
}

.infocenter input {
    width: 225px;
    padding: 0 4px;
    border: 1px solid #777;
    background: #f7f7f7;
    font-size: 14px;
    font-style: italic;
}

.infocenter input::placeholder {
    color: #666;
}

.infocenter button {
    width: 30px;
}

.infocenter .info-toggle {
    width: 17px;
}

.infocenter .login {
    flex: 1;
    justify-content: flex-start;
    gap: 8px;
    padding-left: 5px;
    color: #fff;
}

.infocenter .drop {
    width: 14px;
}

.infocenter .help {
    width: 34px;
    margin-left: 8px;
    border-left: 1px solid #888;
}

.win-controls {
    display: flex;
    width: 208px;
    padding: 0 2px 4px 30px;
}

.win-controls button {
    flex: 1;
}

.win-controls svg {
    fill: none;
    stroke: #999;
}

/* menus */
.menubar {
    height: 32px;
    display: flex;
}

.menubar nav {
    display: flex;
    justify-content: space-between;
    border: solid #999;
    border-width: 1px 1px 1px 0;
    box-shadow: inset 0 -1px #fff;
}

.menubar button {
    padding-bottom: 2px;
}

.menus {
    width: 647px;
    padding: 0 6px 0 15px;
    background: linear-gradient(90deg, #fff 4px, #999 4px 5px, #fff 5px 8px, #999 8px 9px, #f0f0f0 9px);
}

.tools {
    width: 973px;
    padding: 0 6px 0 4px;
    background: #fff;
}

/* ribbon */
.ribbon-tabs {
    height: 25px;
    display: flex;
    padding: 3px 0 0 4px;
    background: #404040;
}

.ribbon-tabs button {
    padding: 0 12px 2px;
    color: #fff;
}

.ribbon-tabs .active {
    width: 173px;
    padding: 0 0 2px;
    margin-right: 2px;
    border-radius: 3px 3px 0 0;
    background: linear-gradient(#d4d4d4, #fdfdfd);
    color: #333;
}

.ribbon-tabs .latin {
    font-size: 16px;
}

.ribbon-tabs .collapse {
    padding: 0 28px;
}

.ribbon {
    height: 123px;
    display: flex;
    background: linear-gradient(#d8d8d8, #8a8a8a);
    border: solid #fff;
    border-width: 1px 1px 2px 1px;
}

.panel {
    display: flex;
    flex-direction: column;
    padding: 0 1px;
    border-right: 2px solid #aaa;
    background: #fdfdfd;
}

.panel.first {
    padding: 0 2px 0 3px;
}

.panel.touch {
    border-right-color: #fff;
}

.items {
    flex: 1;
    display: flex;
    align-items: flex-start;
    padding-top: 8px;
}

.items button {
    display: flex;
    flex-direction: column;
    align-items: center;
    padding: 0 14px;
    color: #b8b8b8;
}

.items .tight {
    padding: 0 9px;
}

.items .snug {
    padding: 0 3px;
}

.items button > svg {
    width: 40px;
    height: 40px;
    margin: 0 -5px 3px;
    overflow: visible;
}

.items text {
    fill: #bbb;
    font-family: "Liberation Serif", serif;
}

.items text.bim {
    fill: #999;
    font-family: "Liberation Sans", sans-serif;
    font-weight: bold;
}

.items i {
    border: solid transparent;
    border-width: 5px 4px 0;
    border-top-color: #777;
    margin-top: 3px;
}

.list {
    width: 100px;
    padding-left: 5px;
    display: flex;
    flex-direction: column;
    gap: 11px;
}

.list button {
    flex-direction: row;
    gap: 8px;
    padding: 0;
}

.list button > svg {
    width: 20px;
    height: 16px;
    margin: 0;
}

.panel footer {
    height: 22px;
    margin: 0 -1px;
    border: solid #ccc;
    border-width: 1px 0;
    background: #efefef;
    line-height: 22px;
    text-align: center;
    color: #333;
}

.panel footer svg {
    margin-left: 4px;
    vertical-align: 1px;
}

.touch footer {
    background: linear-gradient(#c4e4e4, #dffafa);
}

/* document tabs */
.doc-tabs {
    height: 40px;
    padding: 5px 0 0 19px;
    display: flex;
    align-items: flex-start;
    background: linear-gradient(#777 1px, #a6a6a6 1px, #909090 33px, #bbb 33px, #666 34px, #666 38px, #aaa 38px);
}

.doc-tab {
    position: relative;
    width: 174px;
    height: 27px;
    display: flex;
    align-items: center;
    justify-content: space-between;
    padding: 0 28px 0 21px;
    color: #000;
    text-decoration: none;
}

.doc-tab .shape {
    position: absolute;
    inset: 0;
    width: 100%;
    height: 100%;
}

.doc-tab span,
.doc-tab .x {
    position: relative;
}

.new-tab {
    margin: 3px 0 0 -4px;
}

/* drawing area */
.workarea {
    flex: 1;
    min-height: 0;
    display: flex;
    padding: 0 2px;
    background: linear-gradient(90deg, #999 2px, #efefef 2px);
}

.canvas {
    position: relative;
    flex: 1;
    background: #212830;
}

.drawing {
    position: absolute;
    inset: 0;
    width: 100%;
    height: 100%;
}

.view-label {
    position: absolute;
    left: 3px;
    top: 3px;
    font-size: 13px;
    color: #eee;
}

.mdi {
    position: absolute;
    right: 12px;
    top: 4px;
    display: flex;
    gap: 10px;
}

.viewcube {
    position: absolute;
    right: 15px;
    top: 38px;
}

.viewcube text {
    fill: #b4b6b2;
    font-size: 18px;
    text-anchor: middle;
}

.viewcube .top {
    fill: #5b6067;
    font-size: 30px;
}

.wcs {
    position: absolute;
    right: 60px;
    top: 192px;
    width: 47px;
    height: 18px;
    border-radius: 4px;
    background: #9496a4;
    color: #4b4d57;
    font-family: "Liberation Sans", sans-serif;
    font-size: 11px;
    line-height: 16px;
}

.navbar {
    position: absolute;
    right: 4px;
    top: 236px;
    width: 32px;
    display: grid;
    grid-template-rows: 14px 42px 30px 38px 40px 34px 14px;
    border-radius: 4px;
    background: #5f6366;
    box-shadow: 0 0 2px 1px #181d23;
}

.navbar button {
    display: flex;
    align-items: center;
    justify-content: center;
}

.navbar svg {
    fill: none;
    stroke: #42464c;
    overflow: visible;
}

.navbar .solid {
    fill: #42464c;
}

.navbar .end {
    justify-content: flex-end;
    padding-right: 2px;
}

.navbar .end svg {
    stroke: none;
}

.navbar .sep {
    border-top: 1px solid #6c7073;
}

/* command line */
.command {
    position: absolute;
    left: 381px;
    right: 359px;
    bottom: -5px;
    z-index: 2;
    font-family: "DejaVu Sans Mono", "Noto Sans CJK SC", monospace;
    font-size: 19px;
}

.history {
    width: 111px;
    margin: 0 0 4px 75px;
    padding: 1px 3px;
    line-height: 22px;
    border-radius: 3px;
    background: #55585a;
    color: #ccc;
    white-space: nowrap;
}

.cmd-row {
    display: flex;
    height: 34px;
    border: 1px solid #777;
    border-radius: 3px;
    background: #fff;
}

.cmd-handle {
    width: 67px;
    display: flex;
    align-items: center;
    gap: 12px;
    padding-left: 4px;
    background: linear-gradient(#999, #444);
}

.cmd-handle button {
    display: flex;
}

.grip {
    width: 7px;
    height: 22px;
    margin-right: -4px;
    background: repeating-linear-gradient(transparent 0 2px, #666 2px 4px), repeating-linear-gradient(90deg, #ccc 0 2px, #777 2px 4px);
}

.cmd-line {
    flex: 1;
    display: flex;
    align-items: center;
    padding: 0 4px 0 6px;
}

.cmd-line p {
    margin: 0;
    flex: 1;
    line-height: 26px;
}

.recent {
    margin: 0 8px 0 3px;
    fill: #777;
}

.prompt {
    margin: 0 0 0 5px;
}

.cmd-line a {
    display: inline-block;
    padding: 0 2px;
    border-radius: 3px;
    background: #d0d0d0;
    color: #000;
    text-decoration: none;
}

.cmd-line a b {
    color: #00f;
}

.vscroll {
    width: 22px;
    display: flex;
    flex-direction: column;
    justify-content: flex-end;
    align-items: center;
    padding: 0 2px 20px 0;
}

.vscroll span {
    width: 6px;
    height: 21px;
    background: #888;
}

/* layout tabs */
.layout-tabs {
    height: 21px;
    display: flex;
    padding-left: 2px;
    background: #efefef;
}

.layout-tabs .nav {
    width: 18px;
    border: 1px solid #aaa;
    border-left-color: #fff;
    fill: #555;
}

.layout-tabs .nav svg {
    display: block;
    margin: auto;
}

.layout-tabs .tab {
    position: relative;
    width: 57px;
    height: 20px;
    padding-right: 10px;
}

.layout-tabs .tab::after {
    content: "";
    position: absolute;
    right: 0;
    top: 0;
    width: 2px;
    height: 19px;
    background: #777;
    transform: skewX(-22deg);
}

.layout-tabs .model {
    width: 60px;
    padding-right: 3px;
    background: #212830;
    color: #fff;
    clip-path: polygon(0 0, 100% 0, 54px 100%, 6px 100%);
}

.hthumb {
    width: 21px;
    height: 4px;
    margin: 8px 326px 0 auto;
    background: #888;
}

/* status bar */
.statusbar {
    height: 23px;
    display: flex;
    border-top: 2px solid #111;
    background: linear-gradient(#999, #777);
}

.coords {
    width: 282px;
    padding: 2px 0 0 12px;
    font-family: "Liberation Mono", monospace;
    font-size: 13px;
}

.statusbar button {
    flex: none;
    width: 22px;
    display: flex;
    align-items: center;
    justify-content: center;
    border-left: 1px solid #555;
    background: linear-gradient(#c4c4c4, #9c9c9c);
}

.statusbar button > svg {
    width: 18px;
    height: 18px;
}

.statusbar button .caret {
    width: 7px;
    height: 5px;
}

.statusbar .on {
    background: linear-gradient(#dff3f8, #93c8d8);
}

.statusbar .lar {
    gap: 1px;
    align-items: flex-start;
    font-size: 13px;
    font-weight: bold;
}

.statusbar .lar svg {
    width: 8px;
    height: 4px;
    margin-top: 5px;
    fill: none;
    stroke: #e00;
    stroke-width: 2;
}

.statusbar .project,
.statusbar .scale {
    width: 164px;
    padding: 0 3px;
    justify-content: space-between;
    font-family: "Liberation Mono", "Noto Sans CJK SC", monospace;
}

.statusbar .scale {
    width: 59px;
    font-size: 13px;
}

.statusbar .model-space {
    width: 36px;
}

.statusbar .dim svg {
    opacity: 0.5;
}

.statusbar .pressed {
    width: 36px;
    background: #777;
}

.statusbar .thin {
    width: 11px;
}

.fill {
    flex: 1;
}

.gap {
    width: 22px;
    background: #707070;
}

.gap.small {
    width: 6px;
}

.sizegrip {
    width: 20px;
    border-left: 1px solid #555;
    background: radial-gradient(circle, #ddd 1px, transparent 2px) 6px 9px / 5px 5px no-repeat, radial-gradient(circle, #ddd 1px, transparent 2px) 11px 9px / 5px 5px no-repeat, radial-gradient(circle, #ddd 1px, transparent 2px) 11px 4px / 5px 5px no-repeat;
}

/* error dialog */
.dialog {
    position: absolute;
    left: 811px;
    top: 406px;
    width: 442px;
    border: 1px solid #1d4d5a;
    border-radius: 9px;
    overflow: hidden;
    background: #fff;
    box-shadow: 0 12px 32px rgba(0, 0, 0, 0.5);
    font-size: 14px;
}

.dlg-title {
    height: 31px;
    display: flex;
    align-items: center;
    justify-content: space-between;
    padding: 0 14px 2px 3px;
    background: #1d4d5a;
    color: #fff;
}

.dlg-title h2 {
    margin: 0;
    font-size: 15px;
    font-weight: normal;
}

.dlg-title button {
    display: flex;
}

.dialog p {
    margin: 0;
    padding: 76px 14px 54px;
    white-space: nowrap;
}

.dlg-footer {
    display: flex;
    justify-content: flex-end;
    padding: 14px 23px 18px;
    background: #efefef;
}

.dlg-footer button {
    width: 98px;
    height: 33px;
    border: 1px solid #0078d4;
    border-radius: 4px;
    background: #fcfcfc;
}

/* taskbar */
.taskbar {
    height: 60px;
    display: flex;
    justify-content: space-between;
    align-items: center;
    padding: 0 24px 0 17px;
    background: linear-gradient(90deg, #1d212c, #1b2731 30%, #1d212a 50%, #1d212a);
    color: #fff;
}

.apps {
    display: flex;
}

.apps button {
    position: relative;
    width: 50px;
    height: 50px;
    margin-right: 5px;
    border-radius: 5px;
}

.apps button > svg {
    display: block;
    width: 30px;
    height: 30px;
    margin: auto;
    overflow: visible;
}

.apps .current {
    background: #2b2f39;
}

.player {
    font-size: 8px;
    font-weight: bold;
    text-anchor: middle;
}

.dot {
    position: absolute;
    left: 21px;
    bottom: 1px;
    width: 8px;
    height: 4px;
    border-radius: 2px;
    background: #999;
}

.dot.long {
    left: 10px;
    width: 29px;
    background: #ffe000;
}

.dot.teal {
    left: 15px;
    width: 20px;
    background: #9cc6cc;
}

.tray {
    display: flex;
    align-items: center;
}

.tray svg {
    fill: none;
    stroke: #fff;
    margin-right: 10px;
}

.tray .m {
    margin-right: 16px;
}

.tray .kbd {
    margin-right: 20px;
}

.clock {
    width: 74px;
    text-align: right;
    font-size: 14px;
    line-height: 20px;
}

.tray .moon {
    margin: 0 0 0 10px;
}
```
